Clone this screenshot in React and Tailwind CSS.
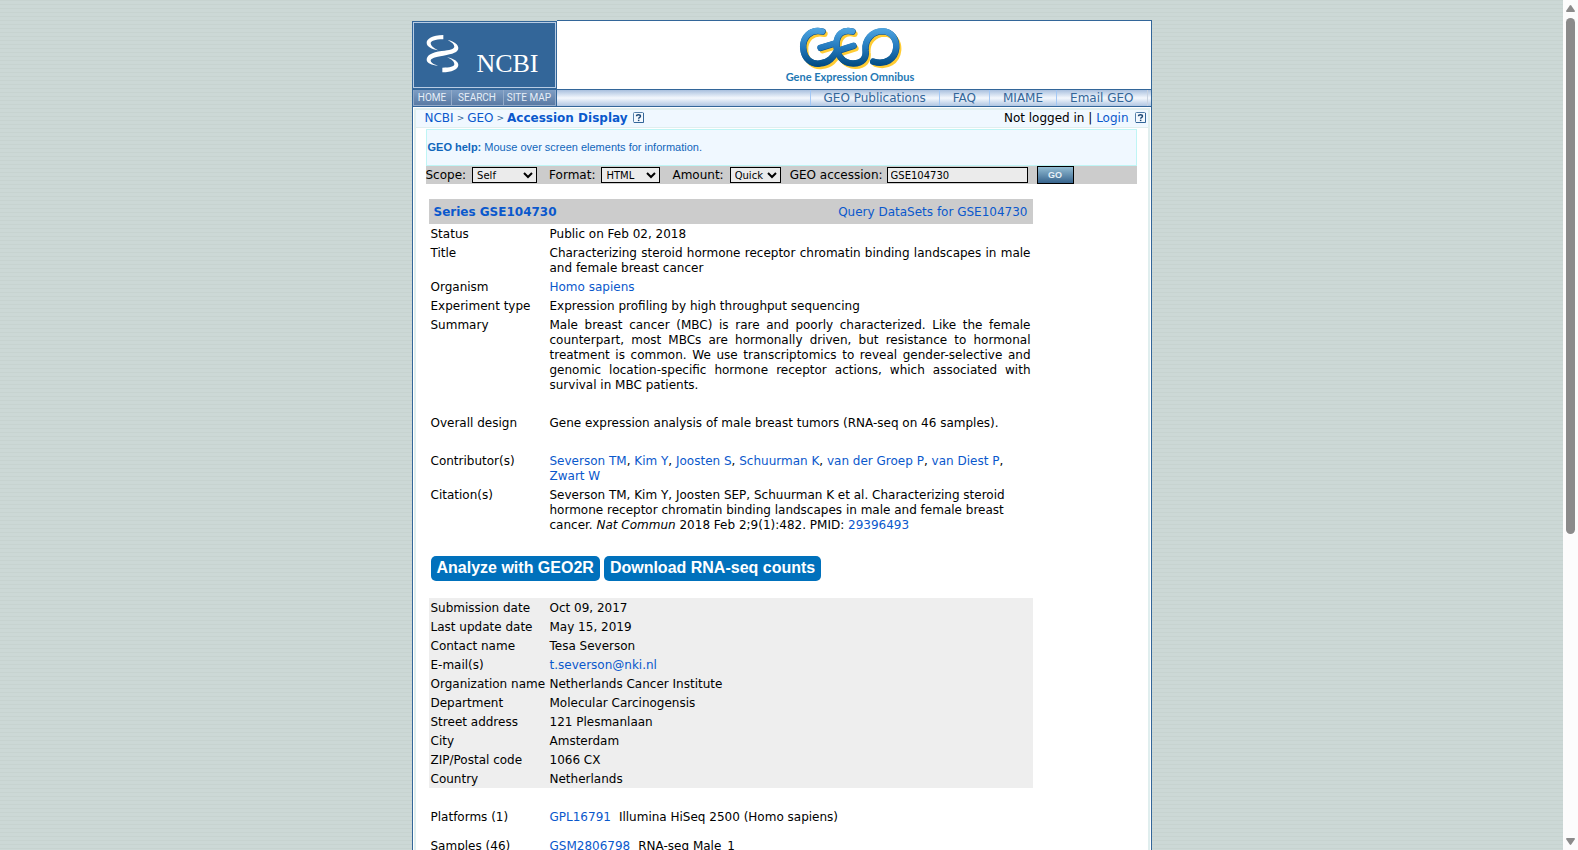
import React from 'react';

const seriesRows = [
  { label: 'Status', value: 'Public on Feb 02, 2018' },
  {
    label: 'Title',
    justify: true,
    value: 'Characterizing steroid hormone receptor chromatin binding landscapes in male and female breast cancer',
  },
  { label: 'Organism', value: <Link>Homo sapiens</Link> },
  { label: 'Experiment type', value: 'Expression profiling by high throughput sequencing' },
  {
    label: 'Summary',
    justify: true,
    spaced: true,
    value:
      'Male breast cancer (MBC) is rare and poorly characterized. Like the female counterpart, most MBCs are hormonally driven, but resistance to hormonal treatment is common. We use transcriptomics to reveal gender-selective and genomic location-specific hormone receptor actions, which associated with survival in MBC patients.',
  },
  {
    label: 'Overall design',
    spaced: true,
    value: 'Gene expression analysis of male breast tumors (RNA-seq on 46 samples).',
  },
  { label: 'Contributor(s)', value: <Contributors /> },
  {
    label: 'Citation(s)',
    value: (
      <>
        Severson TM, Kim Y, Joosten SEP, Schuurman K et al. Characterizing steroid hormone receptor
        chromatin binding landscapes in male and female breast cancer. <em>Nat Commun</em> 2018 Feb
        2;9(1):482. PMID: <Link>29396493</Link>
      </>
    ),
  },
];

const contactRows = [
  { label: 'Submission date', value: 'Oct 09, 2017' },
  { label: 'Last update date', value: 'May 15, 2019' },
  { label: 'Contact name', value: 'Tesa Severson' },
  { label: 'E-mail(s)', value: <Link>t.severson@nki.nl</Link> },
  { label: 'Organization name', value: 'Netherlands Cancer Institute' },
  { label: 'Department', value: 'Molecular Carcinogensis' },
  { label: 'Street address', value: '121 Plesmanlaan' },
  { label: 'City', value: 'Amsterdam' },
  { label: 'ZIP/Postal code', value: '1066 CX' },
  { label: 'Country', value: 'Netherlands' },
];

function Link({ children, className = 'text-[#0a58cc]' }) {
  return (
    <a href="#" className={className}>
      {children}
    </a>
  );
}

function Contributors() {
  const names = ['Severson TM', 'Kim Y', 'Joosten S', 'Schuurman K', 'van der Groep P', 'van Diest P', 'Zwart W'];
  return names.map((name, i) => (
    <React.Fragment key={name}>
      <Link>{name}</Link>
      {i < names.length - 1 && ', '}
    </React.Fragment>
  ));
}

function DataTable({ rows, className = '' }) {
  return (
    <table className={`w-full table-fixed border-collapse ${className}`}>
      <colgroup>
        <col className="w-[119px]" />
        <col />
      </colgroup>
      <tbody>
        {rows.map((row) => (
          <tr key={row.label} className="align-top">
            <th scope="row" className="px-0.5 pt-[3px] pb-px text-left font-normal whitespace-nowrap">
              {row.label}
            </th>
            <td className={`px-0.5 pt-[3px] ${row.spaced ? 'pb-5' : 'pb-px'} ${row.justify ? 'text-justify' : ''}`}>
              {row.value}
            </td>
          </tr>
        ))}
      </tbody>
    </table>
  );
}

function HelpIcon() {
  return (
    <svg width="12" height="12" viewBox="0 0 12 12" className="mb-0.5" aria-label="Help">
      <rect x="0.5" y="0.5" width="10" height="10" rx="1" fill="#f4f9fe" stroke="#5580ab" />
      <path d="M10.5 1v9.5H1" fill="none" stroke="#336699" />
      <path d="M3.5 4.2C3.5 2.3 7.5 2.3 7.5 4.2C7.5 5.4 5.6 5.3 5.6 6.8" fill="none" stroke="#1f4a78" strokeWidth="1.4" />
      <rect x="4.9" y="7.7" width="1.5" height="1.4" fill="#1f4a78" />
    </svg>
  );
}

function NcbiMark() {
  return (
    <svg width="33" height="39" viewBox="78 72 99 117" fill="#fff" aria-hidden="true">
      <path d="M130 75C96 75 80 87 80 98C80 110 95 117 114 121C100 114 92 107 92 100C92 93 104 88 130 88Z" />
      <path d="M143 90C162 94 175 104 175 114C175 127 158 132 130 137C105 141 93 145 92 151C92 158 100 163 114 167C95 165 80 159 80 149C80 136 95 127 125 123C150 120 162 117 163 110C163 103 156 97 143 90Z" />
      <path d="M141 142C162 146 175 155 175 165C175 178 155 187 127 187L127 173C150 173 163 170 163 163C163 154 155 148 141 142Z" />
    </svg>
  );
}

const geoStrokes = [
  'M304 64C268 55 244 82 246 113C248 148 273 163 296 160C324 158 336 140 346 124',
  'M298 113L344 99',
  'M394 64C364 56 348 74 346 98C344 136 366 160 396 160C424 159 436 144 433 120C430 90 452 63 484 63C512 64 527 88 525 113C522 146 492 166 456 154',
  'M350 122L397 107',
];

function GeoMark() {
  const layer = (stroke, width, transform) => (
    <g stroke={stroke} strokeWidth={width} transform={transform}>
      {geoStrokes.map((d) => (
        <path key={d} d={d} />
      ))}
    </g>
  );
  return (
    <svg width="107" height="44" viewBox="228 48 321 132" fill="none" strokeLinecap="round" strokeLinejoin="round" aria-label="GEO">
      <defs>
        <linearGradient id="geo" gradientUnits="userSpaceOnUse" x1="0" y1="55" x2="0" y2="170">
          <stop offset="0" stopColor="#4fa5e0" />
          <stop offset="0.5" stopColor="#2379bd" />
          <stop offset="1" stopColor="#00497f" />
        </linearGradient>
      </defs>
      {layer('#ffcc33', 18, 'translate(7 8)')}
      {layer('#0a4b85', 19, 'translate(1 1)')}
      {layer('url(#geo)', 18)}
    </svg>
  );
}

function NavCell({ children }) {
  return (
    <a href="#" className="border-l border-[#a3c8f5] px-[13px] pt-px text-[#336699]">
      {children}
    </a>
  );
}

function Header() {
  return (
    <header className="flex border-b border-[#336699]">
      <div className="mt-px flex w-[145px] shrink-0 flex-col border-x border-t border-[#336699] bg-[#336699]">
        <a href="#" className="mb-0.5 flex h-[66px] justify-between border border-[#b8cce4] pt-[11px] pr-4 pl-3">
          <NcbiMark />
          <span className="pt-4 font-['Liberation_Serif',serif] text-[26px] leading-[28px] text-white">NCBI</span>
        </a>
        <nav className="flex h-4 justify-between border-x border-b border-[#93abc9] bg-linear-to-b from-[#7f9ec4] to-[#5a7ba4] font-['Roboto',sans-serif] text-[10px] leading-4 text-[#e6eef7]">
          <a href="#" className="grow border-r border-[#93abc9] text-center">HOME</a>
          <a href="#" className="w-[52px] border-r border-[#93abc9] text-center">SEARCH</a>
          <a href="#" className="w-[51px] text-center">SITE MAP</a>
        </nav>
      </div>
      <div className="flex min-w-0 grow flex-col border-t border-r border-[#336699] bg-white">
        <div className="flex h-[68px] flex-col items-center pt-[5px] pr-[7px]">
          <GeoMark />
          <span className="font-['Lato',sans-serif] text-[11px] leading-[14px] font-bold text-[#1f78b4]">
            Gene Expression Omnibus
          </span>
        </div>
        <nav className="flex h-[17px] justify-end border-t border-[#336699] bg-linear-to-b from-[#a9c0de] via-[#f4f8fd] to-[#b0c6e2] pr-[3px]">
          <NavCell>GEO Publications</NavCell>
          <NavCell>FAQ</NavCell>
          <NavCell>MIAME</NavCell>
          <NavCell>Email GEO</NavCell>
          <span className="border-l border-[#c9d3e0]" />
        </nav>
      </div>
    </header>
  );
}

function Breadcrumb() {
  return (
    <div className="flex h-[18px] items-center justify-between border-b border-[#e0eeee] bg-[#f0f8ff] pr-px pl-[9px]">
      <div className="flex items-center">
        <Link>NCBI</Link>
        <span className="px-[3px] text-[9px] text-[#336699]">&gt;</span>
        <Link>GEO</Link>
        <span className="px-[3px] text-[9px] text-[#336699]">&gt;</span>
        <Link className="mr-[5px] font-bold text-[#0a58cc]">Accession Display</Link>
        <HelpIcon />
      </div>
      <div className="flex items-center">
        <span className="whitespace-pre">Not logged in | </span>
        <Link className="mr-1.5 text-[#0a58cc]">Login</Link>
        <HelpIcon />
      </div>
    </div>
  );
}

const field = 'h-4 border border-black bg-[#ebebeb] text-[10px] leading-[14px]';

function SearchForm() {
  return (
    <form className="flex h-[18px] items-center bg-[#cccccc]">
      <label htmlFor="scope" className="mr-1.5">Scope:</label>
      <select id="scope" className={`${field} mr-3 w-[65px]`}>
        <option>Self</option>
      </select>
      <label htmlFor="format" className="mr-1.5">Format:</label>
      <select id="format" className={`${field} mr-3 w-[59px]`}>
        <option>HTML</option>
      </select>
      <label htmlFor="amount" className="mr-1.5">Amount:</label>
      <select id="amount" className={`${field} mr-[9px] w-[51px]`}>
        <option>Quick</option>
      </select>
      <label htmlFor="acc" className="mr-1">GEO accession:</label>
      <input id="acc" defaultValue="GSE104730" className={`${field} mr-[9px] w-[141px] px-[3px]`} />
      <button
        type="button"
        className="h-[18px] w-[37px] border border-black bg-linear-to-b from-[#93bdd3] to-[#38648d] font-['Liberation_Sans',sans-serif] text-[9px] leading-4 font-bold text-[#e8f1f7]"
      >
        GO
      </button>
    </form>
  );
}

function BlueButton({ children }) {
  return (
    <button
      type="button"
      className="h-[25px] rounded-[5px] bg-[#0071bc] px-1.5 pb-0.5 font-['Liberation_Sans',sans-serif] text-[16px] leading-[23px] font-bold text-white"
    >
      {children}
    </button>
  );
}

function Scrollbar() {
  return (
    <div className="flex w-[15px] shrink-0 flex-col items-center bg-[#fcfcfc] py-[5px]">
      <svg width="9" height="7" viewBox="0 0 9 7" fill="#8b8b8b" aria-hidden="true">
        <path d="M3.8 0.4Q4.5 -0.3 5.2 0.4L9 6Q9 7 8 7H1Q0 7 0 6Z" />
      </svg>
      <div className="my-[6px] flex w-[9px] grow flex-col">
        <div className="h-[63.4%] rounded-full bg-[#8b8b8b]" />
      </div>
      <svg width="9" height="7" viewBox="0 0 9 7" fill="#8b8b8b" aria-hidden="true">
        <path d="M3.8 6.6Q4.5 7.3 5.2 6.6L9 1Q9 0 8 0H1Q0 0 0 1Z" />
      </svg>
    </div>
  );
}

export default function App() {
  return (
    <div className="flex h-screen overflow-hidden font-['DejaVu_Sans',sans-serif] text-[12px] leading-[15px] text-black">
      <div className="min-w-0 grow overflow-hidden bg-[#ccd8d6] bg-[repeating-linear-gradient(to_bottom,#c7d3d0_0px,#c7d3d0_1px,#ccd8d6_1px,#ccd8d6_4px)] pt-5">
        <div className="mx-auto w-[740px]">
          <Header />
          <div className="border-x border-[#336699] bg-white px-px pt-px">
            <main className="border-2 border-[#e0eeee]">
              <Breadcrumb />
              <div className="mt-px mr-[11px] ml-[10px]">
                <p className="flex h-[37px] items-center border border-[#bff5f5] bg-[#f0f8ff] px-px font-['Liberation_Sans',sans-serif] text-[11px] whitespace-pre text-[#1166bb]">
                  <strong>GEO help:</strong> Mouse over screen elements for information.
                </p>
                <SearchForm />
              </div>
              <div className="mt-[15px] ml-[13px] w-[604px]">
                <div className="flex h-[25px] items-center justify-between bg-[#cccccc] px-[5px] pt-0.5">
                  <strong className="text-[#0a58cc]">Series GSE104730</strong>
                  <Link>Query DataSets for GSE104730</Link>
                </div>
                <DataTable rows={seriesRows} />
                <div className="mt-[22px] mb-[17px] flex gap-1 pl-0.5">
                  <BlueButton>Analyze with GEO2R</BlueButton>
                  <BlueButton>Download RNA-seq counts</BlueButton>
                </div>
                <DataTable rows={contactRows} className="bg-[#eeeeee]" />
                <DataTable
                  className="mt-[19px]"
                  rows={[{ label: 'Platforms (1)', value: <><Link>GPL16791</Link><span className="ml-2">Illumina HiSeq 2500 (Homo sapiens)</span></> }]}
                />
                <DataTable
                  className="mt-[10px]"
                  rows={[{ label: 'Samples (46)', value: <><Link>GSM2806798</Link><span className="ml-2">RNA-seq Male_1</span></> }]}
                />
              </div>
            </main>
          </div>
        </div>
      </div>
      <Scrollbar />
    </div>
  );
}
